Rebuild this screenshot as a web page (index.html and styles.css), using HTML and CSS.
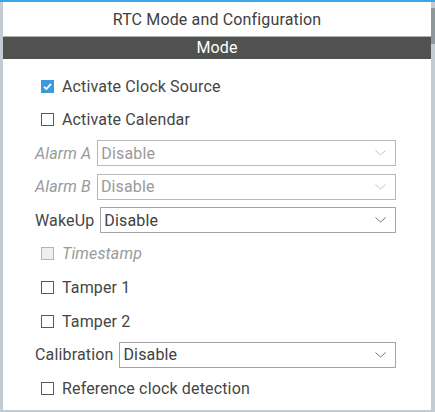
FILE: index.html
```html
<!DOCTYPE html>
<html>
<head>
<meta charset="utf-8">
<link rel="stylesheet" href="styles.css">
</head>
<body>
<div class="frame">
  <div class="panel">
    <div class="title">RTC Mode and Configuration</div>
    <div class="modebar">Mode</div>
    <div class="content">
      <div class="row check-row">
        <span class="cb checked"><svg width="13" height="13" viewBox="0 0 13 13"><path d="M3 6.6 L5.4 9 L10 3.8" fill="none" stroke="#fff" stroke-width="1.8"/></svg></span>
        <span class="cb-label">Activate Clock Source</span>
      </div>
      <div class="row check-row">
        <span class="cb"></span>
        <span class="cb-label">Activate Calendar</span>
      </div>
      <div class="row">
        <span class="label disabled">Alarm A</span>
        <div class="select disabled"><span>Disable</span><svg class="chev" width="11" height="6" viewBox="0 0 11 6"><path d="M0.5 0.5 L5.5 5 L10.5 0.5" fill="none" stroke="currentColor" stroke-width="1"/></svg></div>
      </div>
      <div class="row">
        <span class="label disabled">Alarm B</span>
        <div class="select disabled"><span>Disable</span><svg class="chev" width="11" height="6" viewBox="0 0 11 6"><path d="M0.5 0.5 L5.5 5 L10.5 0.5" fill="none" stroke="currentColor" stroke-width="1"/></svg></div>
      </div>
      <div class="row">
        <span class="label">WakeUp</span>
        <div class="select"><span>Disable</span><svg class="chev" width="11" height="6" viewBox="0 0 11 6"><path d="M0.5 0.5 L5.5 5 L10.5 0.5" fill="none" stroke="currentColor" stroke-width="1"/></svg></div>
      </div>
      <div class="row check-row">
        <span class="cb cb-disabled"></span>
        <span class="cb-label disabled">Timestamp</span>
      </div>
      <div class="row check-row">
        <span class="cb"></span>
        <span class="cb-label">Tamper 1</span>
      </div>
      <div class="row check-row">
        <span class="cb"></span>
        <span class="cb-label">Tamper 2</span>
      </div>
      <div class="row">
        <span class="label">Calibration</span>
        <div class="select"><span>Disable</span><svg class="chev" width="11" height="6" viewBox="0 0 11 6"><path d="M0.5 0.5 L5.5 5 L10.5 0.5" fill="none" stroke="currentColor" stroke-width="1"/></svg></div>
      </div>
      <div class="row check-row">
        <span class="cb"></span>
        <span class="cb-label">Reference clock detection</span>
      </div>
    </div>
  </div>
  <div class="scroll"><div class="thumb"></div></div>
</div>
</body>
</html>
```

FILE: styles.css
```css
html, body {
  margin: 0;
  padding: 0;
}
body {
  width: 435px;
  height: 412px;
  background: #c3ccd2;
  font-family: Roboto, "Noto Sans", sans-serif;
  font-size: 16px;
  letter-spacing: 0.15px;
  color: #454545;
  overflow: hidden;
}
.frame {
  display: flex;
  border-top: 2px solid #3da5e6;
  height: 408px;
  padding-left: 3px;
}
.panel {
  width: 428px;
  background: #fff;
  display: flex;
  flex-direction: column;
}
.scroll {
  width: 4px;
  padding-top: 6px;
}
.thumb {
  height: 36px;
  background: #8e979c;
}
.title {
  height: 34px;
  line-height: 35px;
  text-align: center;
  color: #404040;
  border-bottom: 1px solid #b0b0b0;
}
.modebar {
  height: 22px;
  line-height: 22px;
  background: #505250;
  color: #fff;
  text-align: center;
}
.content {
  padding: 14px 35px 0 32px;
  display: flex;
  flex-direction: column;
  gap: 7.6px;
}
.row {
  height: 26px;
  display: flex;
  align-items: center;
}
.check-row {
  padding-left: 6px;
}
.cb {
  width: 11px;
  height: 11px;
  border: 1px solid #5a5a5a;
  background: #fff;
  flex: none;
  position: relative;
}
.cb.checked {
  width: 13px;
  height: 13px;
  border: none;
  background: #3b99dc;
}
.cb.checked svg {
  display: block;
}
.cb.cb-disabled {
  border-color: #b5b5b5;
  background: #efefef;
}
.cb-label {
  margin-left: 8px;
}
.label {
  margin-right: 6px;
  white-space: nowrap;
}
.disabled {
  color: #9a9a9a;
  font-style: italic;
}
.select {
  flex: 1;
  height: 24px;
  border: 1px solid #a4a4a4;
  display: flex;
  align-items: center;
  justify-content: space-between;
  padding: 0 9px 0 3px;
  color: #404040;
}
.select.disabled {
  font-style: normal;
  border-color: #b8b8b8;
  color: #9a9a9a;
}
.chev {
  color: #707070;
}
.select.disabled .chev {
  color: #c4c4c4;
}
```
